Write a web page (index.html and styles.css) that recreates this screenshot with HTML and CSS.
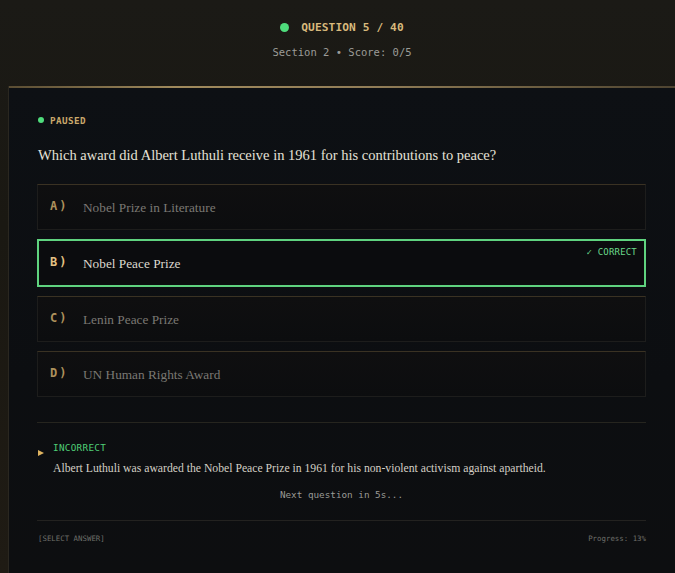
FILE: index.html
```html
<!DOCTYPE html>
<html lang="en">
<head>
<meta charset="utf-8">
<title>Quiz</title>
<link rel="stylesheet" href="styles.css">
</head>
<body>
<header class="top">
  <div class="qline"><span class="qdot"></span><span class="qtext">QUESTION 5 / 40</span></div>
  <div class="sub">Section 2 • Score: 0/5</div>
</header>
<main class="card">
  <div class="status"><span class="sdot"></span>PAUSED</div>
  <h1 class="question">Which award did Albert Luthuli receive in 1961 for his contributions to peace?</h1>
  <div class="options">
    <div class="opt"><span class="lab">A)</span><span class="otext">Nobel Prize in Literature</span></div>
    <div class="opt opt-correct"><span class="lab">B)</span><span class="otext">Nobel Peace Prize</span><span class="badge">✓ CORRECT</span></div>
    <div class="opt"><span class="lab">C)</span><span class="otext">Lenin Peace Prize</span></div>
    <div class="opt"><span class="lab">D)</span><span class="otext">UN Human Rights Award</span></div>
  </div>
  <section class="feedback">
    <div class="fbrow">
      <span class="tri"></span>
      <div class="fbbody">
        <div class="fblabel">INCORRECT</div>
        <p class="expl">Albert Luthuli was awarded the Nobel Peace Prize in 1961 for his non-violent activism against apartheid.</p>
      </div>
    </div>
    <div class="next">Next question in 5s...</div>
  </section>
  <footer class="foot">
    <span>[SELECT ANSWER]</span>
    <span>Progress: 13%</span>
  </footer>
</main>
</body>
</html>
```

FILE: styles.css
```css
html, body {
  margin: 0;
  padding: 0;
}
body {
  width: 675px;
  height: 573px;
  overflow: hidden;
  background: linear-gradient(180deg, #1b1a16 0%, #1a1812 40%, #1f1b14 100%);
  font-family: "DejaVu Sans Mono", "Liberation Mono", monospace;
}
.top {
  margin-left: 8px;
  width: 668px;
  height: 86px;
  box-sizing: border-box;
  padding-top: 20px;
  text-align: center;
}
.qline {
  display: flex;
  justify-content: center;
  align-items: center;
  gap: 12px;
  height: 14px;
}
.qdot {
  width: 9px;
  height: 9px;
  border-radius: 50%;
  background: #4fdc7c;
}
.qtext {
  font-size: 11.2px;
  font-weight: bold;
  letter-spacing: 0.1px;
  color: #d8b97c;
}
.sub {
  margin-top: 11px;
  font-size: 10.5px;
  color: #9c9c98;
  line-height: 14px;
}
.card {
  position: relative;
  margin-left: 8px;
  width: 668px;
  height: 487px;
  box-sizing: border-box;
  padding: 27px 30px 0 28px;
  background: linear-gradient(180deg, #0d1014 0%, #0c0e11 60%, #0d0e10 100%);
  border-left: 1px solid #2a2720;
}
.card::before {
  content: "";
  position: absolute;
  left: 0;
  right: 0;
  top: 0;
  height: 2px;
  background: linear-gradient(90deg, #5a4d33 0%, #a08a5c 25%, #917d57 55%, #6b5d40 80%, #4e4431 100%);
}
.status {
  display: flex;
  align-items: center;
  gap: 6px;
  height: 14px;
  padding-left: 1px;
  font-size: 9.3px;
  font-weight: bold;
  letter-spacing: 0.4px;
  color: #c9a86b;
}
.sdot {
  width: 6px;
  height: 6px;
  border-radius: 50%;
  background: #4fdc7c;
}
.question {
  margin: 18px 0 0 1px;
  font-family: "Liberation Serif", serif;
  font-weight: normal;
  font-size: 14.5px;
  line-height: 20px;
  color: #e5e1d7;
}
.options {
  margin-top: 19px;
  display: flex;
  flex-direction: column;
  gap: 9px;
}
.opt {
  position: relative;
  display: flex;
  align-items: center;
  height: 46px;
  box-sizing: border-box;
  padding: 0 12px;
  border: 1px solid #1d1d1c;
  border-top-color: #3a3223;
  background: linear-gradient(180deg, #0f0f10 0%, #0c0d0f 100%);
}
.lab {
  width: 33px;
  flex: none;
  margin-top: -2px;
  font-size: 12px;
  font-weight: bold;
  letter-spacing: 2px;
  color: #ad915c;
}
.otext {
  margin-top: 2px;
  font-family: "Liberation Serif", serif;
  font-size: 13.3px;
  color: #7a7873;
}
.opt-correct {
  height: 48px;
  padding: 0 11px;
  border: 2px solid #5fd37f;
  background: #0b0c0e;
}
.opt-correct .lab {
  color: #e3c283;
}
.opt-correct .otext {
  color: #ddd9cf;
}
.badge {
  position: absolute;
  top: 6px;
  right: 7px;
  font-size: 9px;
  color: #6ad88a;
  letter-spacing: 0.2px;
}
.feedback {
  margin-top: 25px;
  border-top: 1px solid #26251f;
  padding-top: 19px;
}
.fbrow {
  display: flex;
  gap: 9px;
  padding-left: 1px;
}
.tri {
  flex: none;
  width: 0;
  height: 0;
  margin-top: 8px;
  border-left: 6px solid #e0b460;
  border-top: 3.5px solid transparent;
  border-bottom: 3.5px solid transparent;
}
.fbbody {
  flex: 1;
}
.fblabel {
  font-size: 9.3px;
  line-height: 12px;
  color: #4fcf77;
  letter-spacing: 0.3px;
}
.expl {
  margin: 6px 0 0 0;
  font-family: "Liberation Serif", serif;
  font-size: 11.7px;
  line-height: 18px;
  color: #d3cfc5;
}
.next {
  margin-top: 10px;
  text-align: center;
  font-size: 9.3px;
  line-height: 14px;
  color: #9a9a96;
}
.foot {
  margin-top: 18px;
  border-top: 1px solid #232220;
  padding-top: 13px;
  padding-left: 1px;
  display: flex;
  justify-content: space-between;
  font-size: 7.4px;
  line-height: 10px;
  color: #6e6e6a;
}
```
